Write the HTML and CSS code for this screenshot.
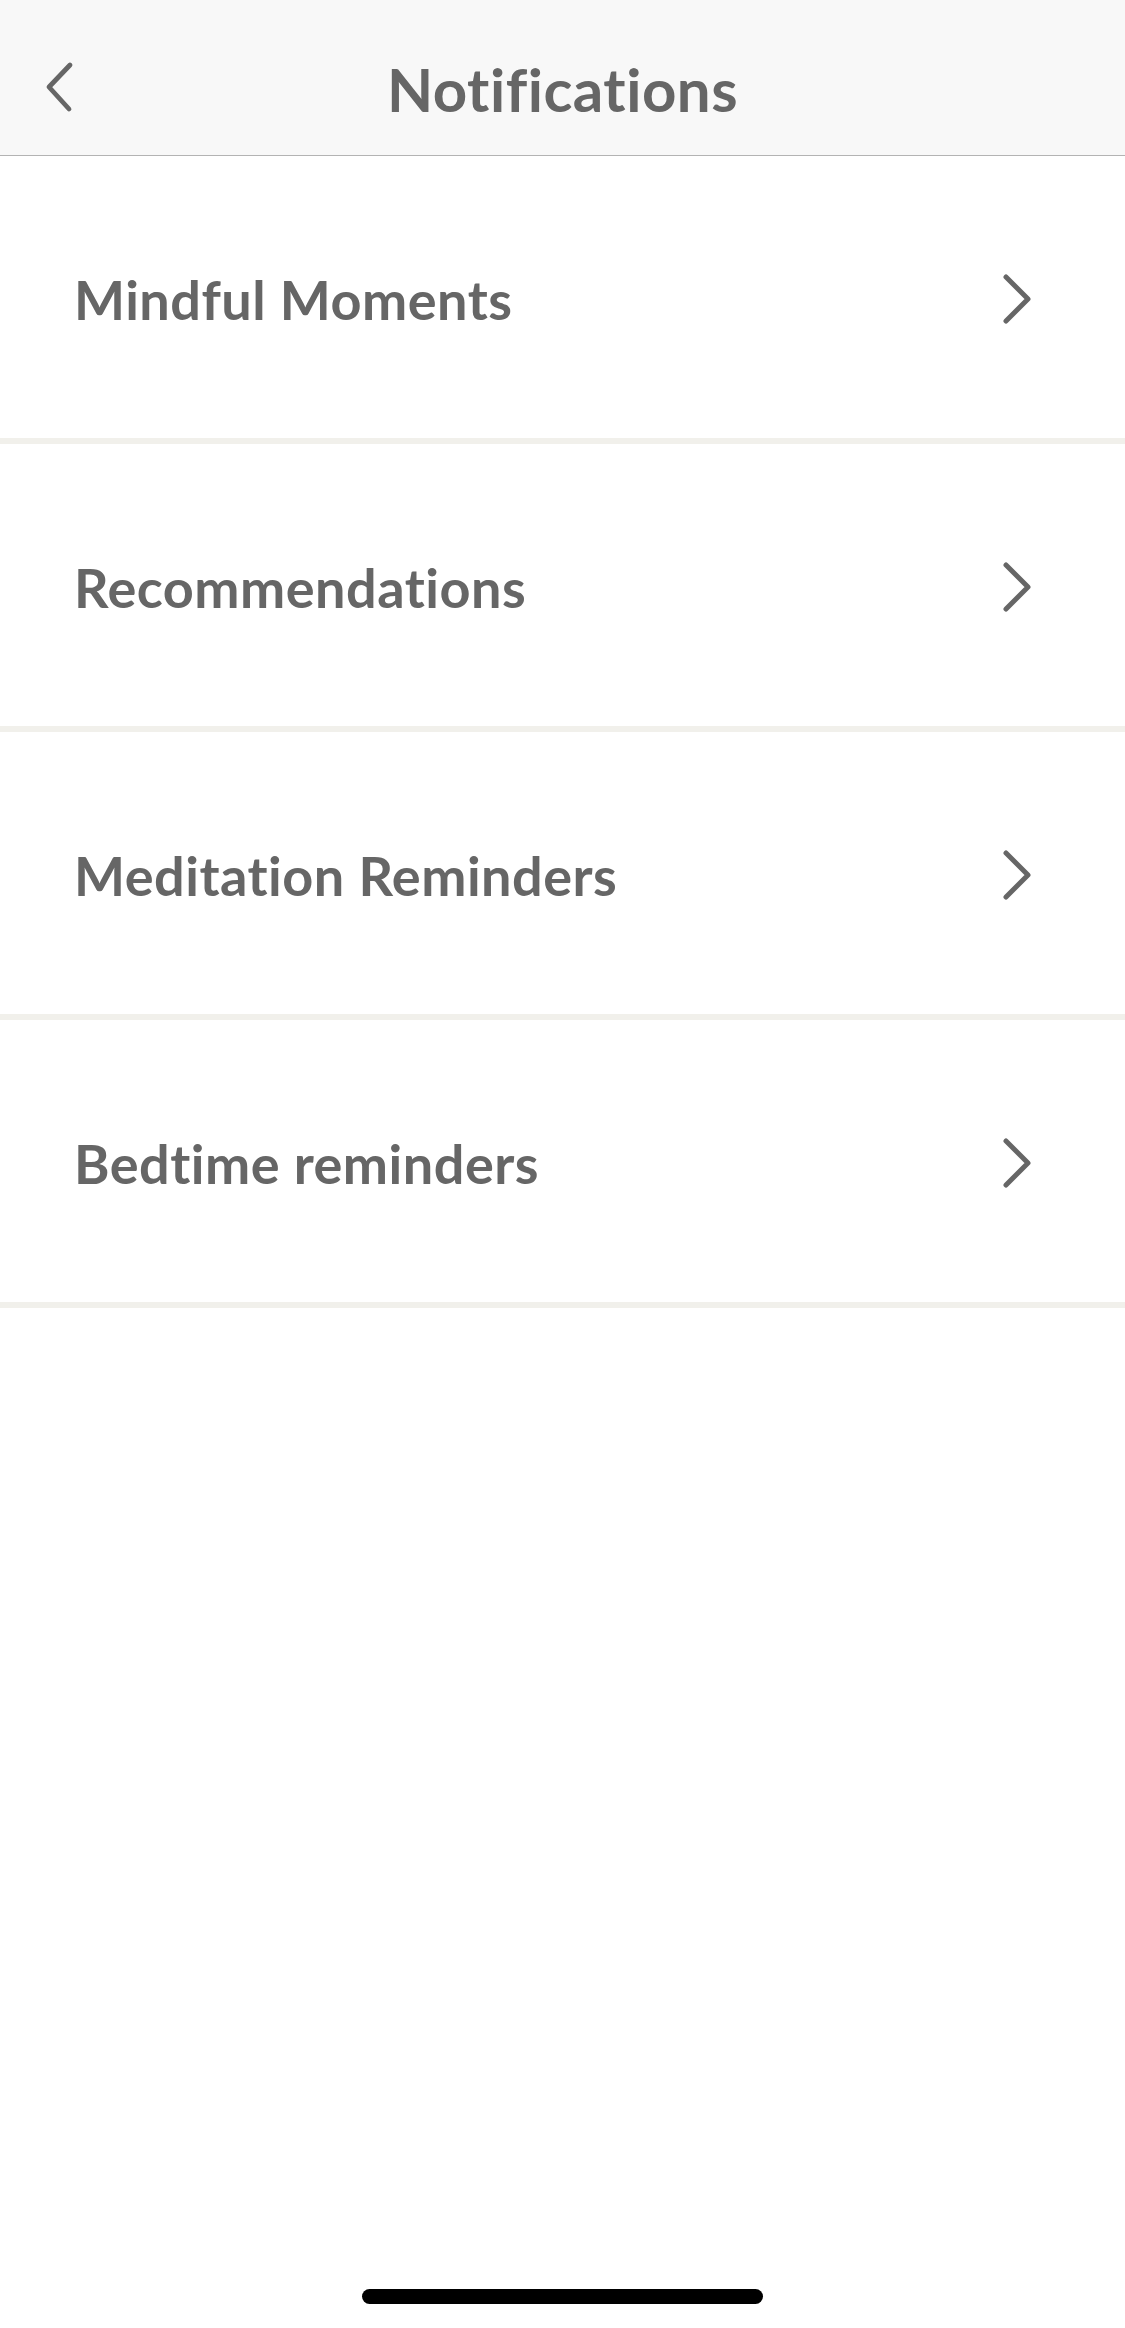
FILE: index.html
```html
<!DOCTYPE html>
<html lang="en">
<head>
<meta charset="utf-8">
<title>Notifications</title>
<link rel="stylesheet" href="styles.css">
</head>
<body>
<div class="screen">
  <header class="topbar">
    <button class="back" aria-label="Back">
      <svg width="40" height="60" viewBox="0 0 40 60"><polyline points="25,7 4,29 24,51" fill="none" stroke="#666666" stroke-width="4.8" stroke-linecap="round" stroke-linejoin="round"/></svg>
    </button>
    <h1 class="title">Notifications</h1>
  </header>
  <ul class="list">
    <li class="row"><span class="label">Mindful Moments</span><svg class="chev" width="40" height="60" viewBox="0 0 40 60"><polyline points="8,8 30,30 8,52" fill="none" stroke="#666666" stroke-width="5" stroke-linecap="round" stroke-linejoin="round"/></svg></li>
    <li class="row"><span class="label">Recommendations</span><svg class="chev" width="40" height="60" viewBox="0 0 40 60"><polyline points="8,8 30,30 8,52" fill="none" stroke="#666666" stroke-width="5" stroke-linecap="round" stroke-linejoin="round"/></svg></li>
    <li class="row"><span class="label">Meditation Reminders</span><svg class="chev" width="40" height="60" viewBox="0 0 40 60"><polyline points="8,8 30,30 8,52" fill="none" stroke="#666666" stroke-width="5" stroke-linecap="round" stroke-linejoin="round"/></svg></li>
    <li class="row"><span class="label">Bedtime reminders</span><svg class="chev" width="40" height="60" viewBox="0 0 40 60"><polyline points="8,8 30,30 8,52" fill="none" stroke="#666666" stroke-width="5" stroke-linecap="round" stroke-linejoin="round"/></svg></li>
  </ul>
  <div class="home-indicator"></div>
</div>
</body>
</html>
```
FILE: styles.css
```css
* { box-sizing: border-box; }
html, body {
  margin: 0;
  padding: 0;
  background: #ffffff;
}
body {
  font-family: Lato, "Open Sans", "Liberation Sans", sans-serif;
  color: #666666;
}
.screen {
  width: 1125px;
  height: 2328px;
  display: flex;
  flex-direction: column;
  position: relative;
}
.topbar {
  height: 156px;
  background: #f8f8f8;
  border-bottom: 1.5px solid #b3b3b3;
  display: flex;
  align-items: center;
  justify-content: center;
  position: relative;
}
.back {
  position: absolute;
  left: 45px;
  top: 58px;
  width: 40px;
  height: 60px;
  padding: 0;
  border: 0;
  background: none;
  display: flex;
}
.title {
  margin: 0;
  font-size: 60px;
  font-weight: 700;
  color: #666666;
  padding-top: 22px;
  letter-spacing: 0.5px;
}
.list {
  list-style: none;
  margin: 0;
  padding: 0;
}
.row {
  height: 288px;
  border-bottom: 6px solid #f1f0eb;
  display: flex;
  align-items: center;
  justify-content: space-between;
  padding: 5px 87px 0 74px;
}
.label {
  font-size: 54px;
  font-weight: 700;
  color: #666666;
  letter-spacing: 0.5px;
}
.chev {
  display: block;
  margin-top: -2px;
}
.home-indicator {
  position: absolute;
  left: 362px;
  top: 2289px;
  width: 401px;
  height: 15px;
  border-radius: 8px;
  background: #000000;
}
```
